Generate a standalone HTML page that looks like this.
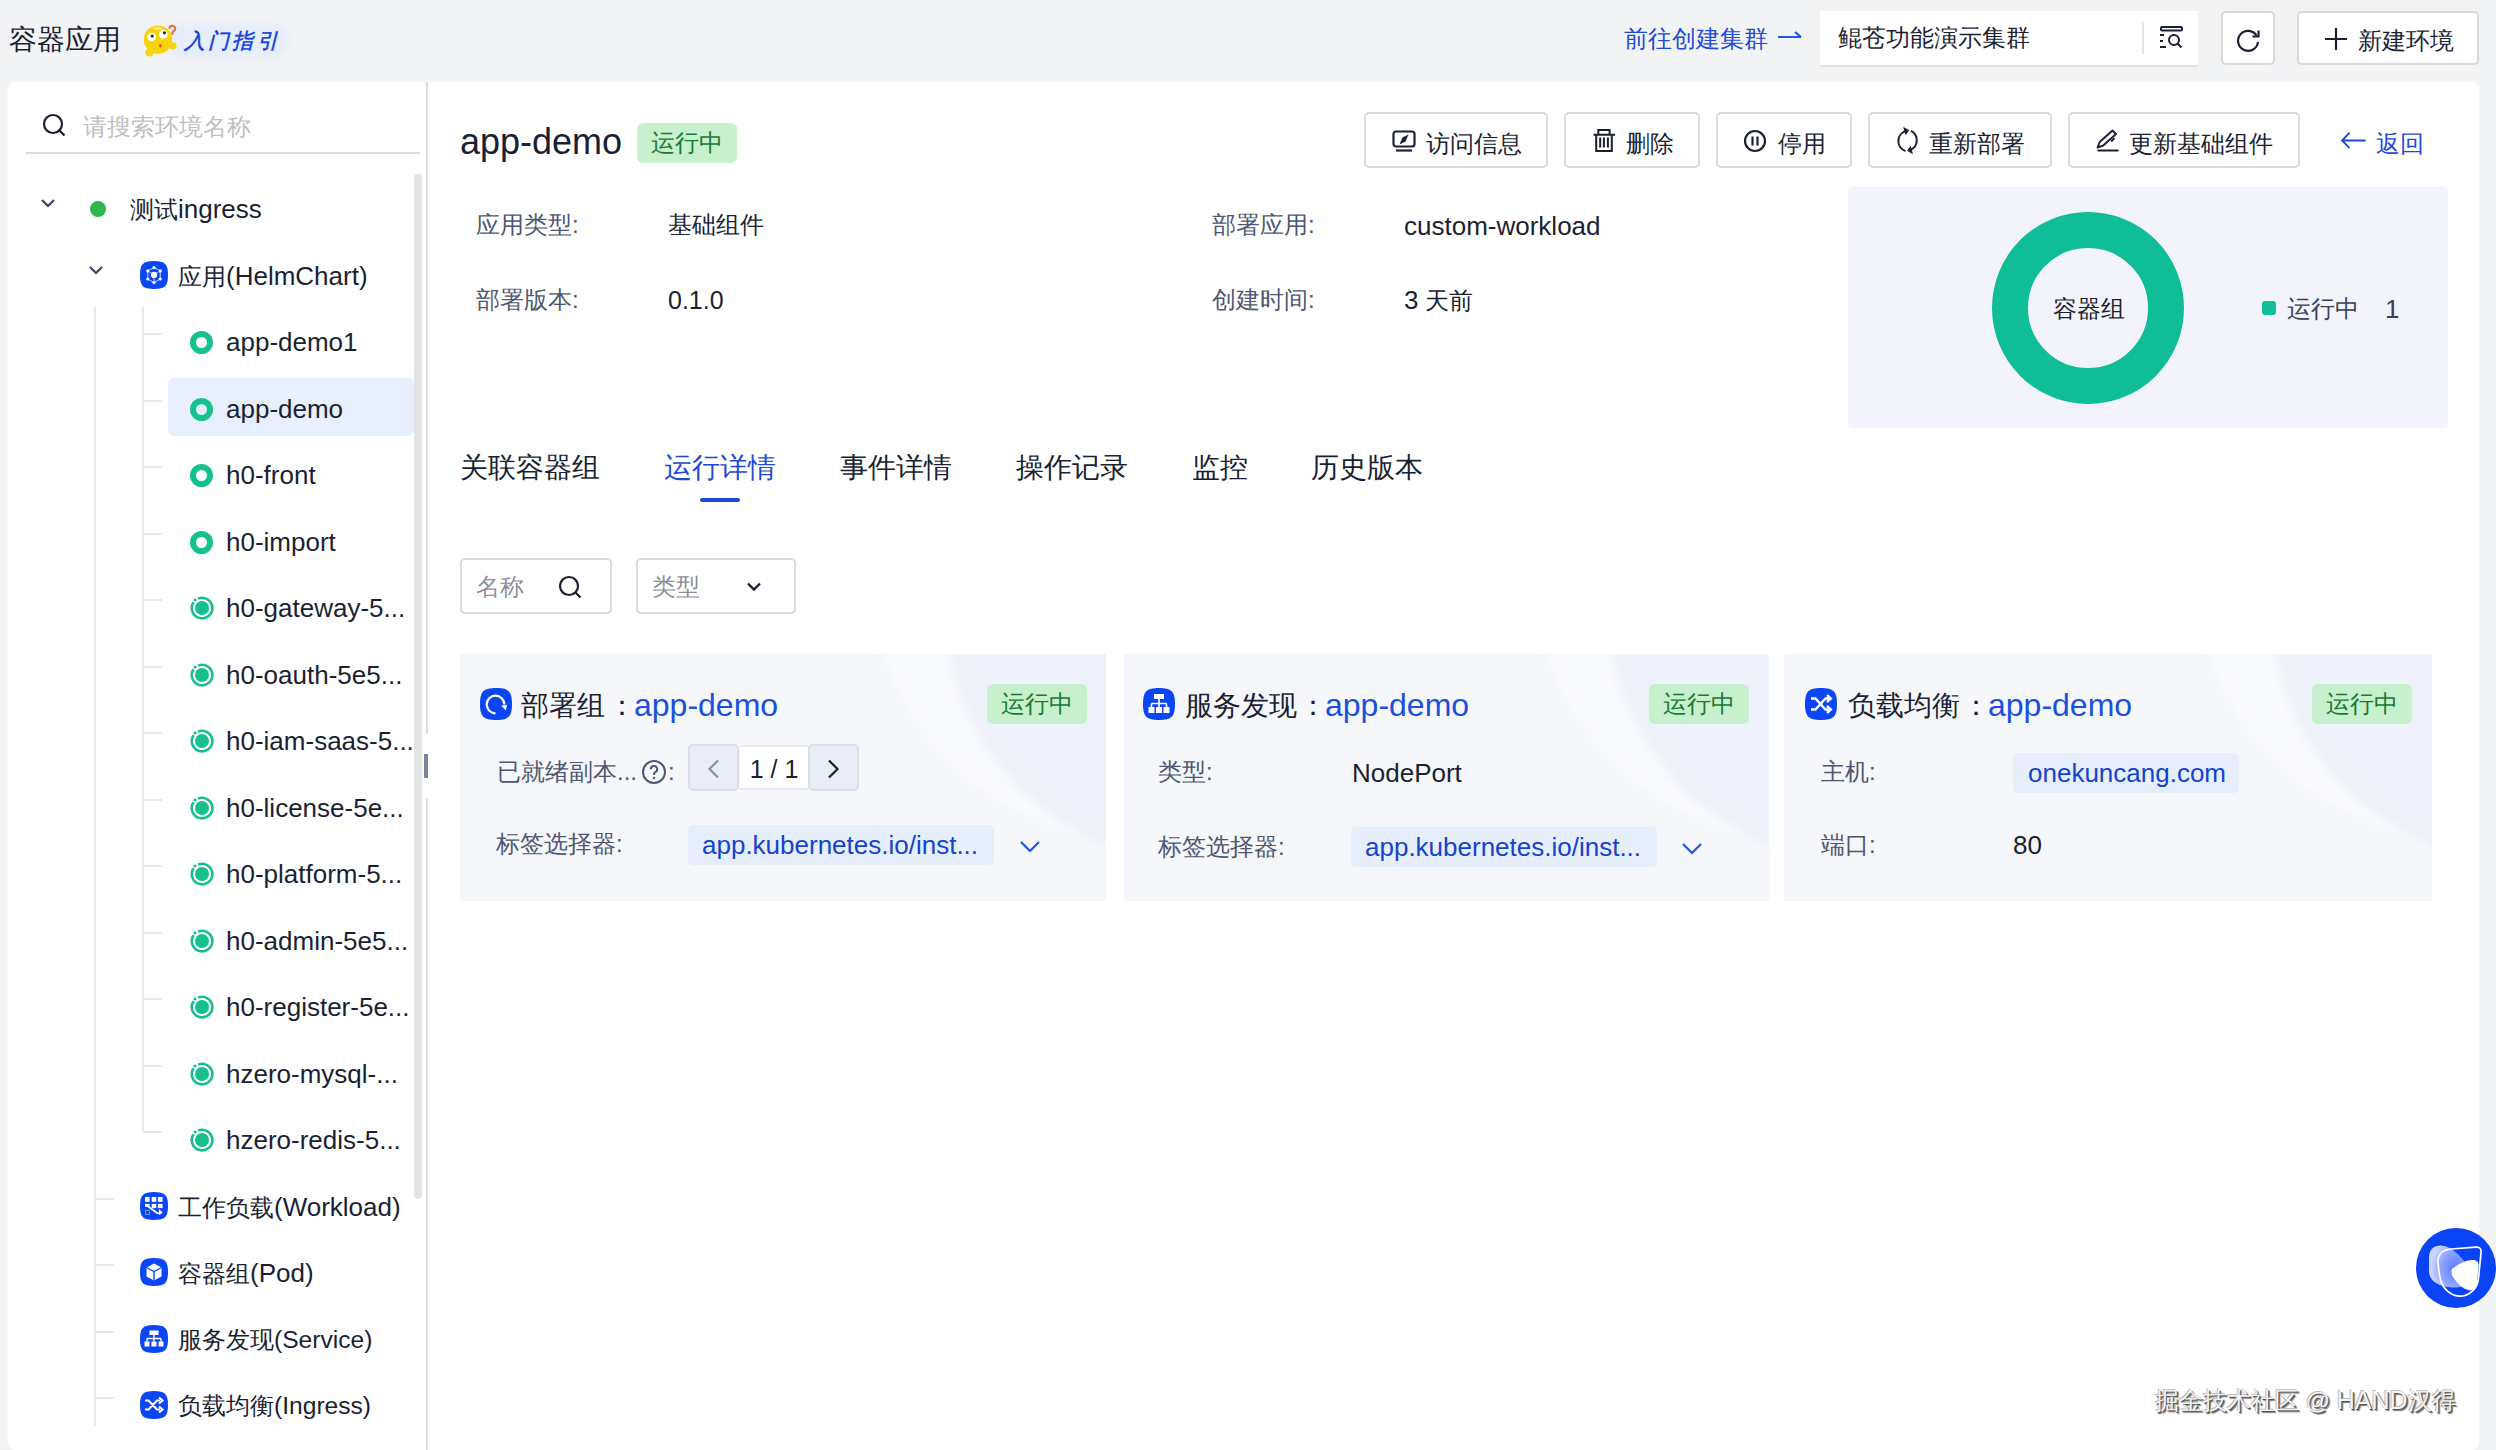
<!DOCTYPE html>
<html><head><meta charset="utf-8">
<style>
*{box-sizing:border-box;margin:0;padding:0}
html,body{width:2496px;height:1450px;overflow:hidden}
body{background:#f2f3f5;font-family:"Liberation Sans",sans-serif;color:#1b1f33;position:relative}
.t{position:absolute;white-space:nowrap;line-height:40px;height:40px;font-size:24px}
.f28{font-size:28px}
.L{font-size:26px}
.blue2{color:#1a50dc}
.blue3{color:#1443cc}
.deco1{position:absolute;width:530px;height:530px;border-radius:50%;background:#f9fafd;filter:blur(4px)}
.deco2{position:absolute;width:504px;height:504px;border-radius:50%;background:#edf0f9;filter:blur(5px);opacity:0.9}
.blue{color:#1d4ad9}
.lab{color:#4e5672}
.abs{position:absolute}
.btn{position:absolute;border:2px solid #d9d9d9;border-radius:5px;background:#fff}
.tag{position:absolute;background:#c7f0cd;color:#187a36;border-radius:6px;font-size:24px;line-height:40px;text-align:center}
.ico{position:absolute;width:28px;height:28px;border-radius:9px;background:#0a46f5}
.ring{position:absolute;width:23px;height:23px;border-radius:50%;border:6px solid #17c08f}
.tick{position:absolute;height:2px;width:19px;background:#e8e8e8}
.card{position:absolute;top:654px;height:247px;border-radius:3px;background:#f5f7fb;overflow:hidden;box-shadow:inset 0 0 0 1px #f3f4f8}
</style></head><body>

<!-- header -->
<div class="t f28" style="left:9px;top:20px">容器应用</div>
<div class="abs" style="left:166px;top:24px;width:122px;height:34px;border-radius:17px;background:#e6edfb;filter:blur(3px)"></div>
<svg class="abs" style="left:141px;top:22px" width="38" height="36" viewBox="0 0 38 36">
 <circle cx="17" cy="17.6" r="14.2" fill="#f7d20e"/>
 <circle cx="8.5" cy="30.5" r="4" fill="#f7d20e"/>
 <circle cx="32" cy="23.8" r="3.6" fill="#f7d20e"/>
 <ellipse cx="17" cy="6.5" rx="5" ry="1.6" fill="#fbe87a"/>
 <circle cx="10.8" cy="15" r="4.3" fill="#fff"/><circle cx="11.2" cy="14" r="1.6" fill="#3a2a10"/>
 <circle cx="22.3" cy="12.4" r="4.3" fill="#fff"/><circle cx="23.5" cy="10.8" r="1.6" fill="#3a2a10"/>
 <ellipse cx="19.4" cy="23.8" rx="1.3" ry="1.8" fill="#e0502a"/>
 <path d="M28.6 6.8a2.8 2.8 0 1 1 4 2.3c-.9.5-1.2 1.1-1.2 2v1.6" stroke="#e0683a" stroke-width="2" fill="none"/>
</svg>
<div class="t" style="left:184px;top:21px;font-size:21px;color:#1243dc;font-style:italic;letter-spacing:3.2px;-webkit-text-stroke:0.5px #1243dc">入门指引</div>

<div class="t blue" style="left:1624px;top:19px">前往创建集群</div>
<svg class="abs" style="left:1776px;top:28px" width="28" height="18" viewBox="0 0 28 18"><path d="M2 9H25M19 4l6 5" stroke="#1f57e6" stroke-width="2.2" fill="none"/></svg>

<div class="abs" style="left:1820px;top:11px;width:378px;height:54px;background:#fff;border-radius:1px;box-shadow:0 2px 1px rgba(0,0,0,0.07)"></div>
<div class="t" style="left:1838px;top:18px">鲲苍功能演示集群</div>
<div class="abs" style="left:2142px;top:22px;width:2px;height:32px;background:#e3e3e3"></div>
<svg class="abs" style="left:2158px;top:25px" width="26" height="26" viewBox="0 0 26 26">
 <rect x="3" y="2" width="21" height="3.5" rx="1" fill="none" stroke="#1b1f33" stroke-width="2"/>
 <path d="M2 10h4M2 16h3M2 22h6" stroke="#1b1f33" stroke-width="2"/>
 <circle cx="16" cy="15" r="5" fill="none" stroke="#1b1f33" stroke-width="2"/>
 <path d="M19.5 18.5l4 4" stroke="#1b1f33" stroke-width="2"/>
</svg>

<div class="btn" style="left:2221px;top:11px;width:54px;height:54px"></div>
<svg class="abs" style="left:2234px;top:26px" width="28" height="28" viewBox="0 0 28 28"><path d="M22.5 9.5A10 10 0 1 0 24 16" stroke="#1b1f33" stroke-width="2.2" fill="none"/><path d="M24.5 4.5v6h-6" stroke="#1b1f33" stroke-width="2.2" fill="none"/></svg>
<div class="btn" style="left:2297px;top:11px;width:182px;height:54px"></div>
<svg class="abs" style="left:2324px;top:27px" width="24" height="24" viewBox="0 0 24 24"><path d="M12 1v22M1 12h22" stroke="#1b1f33" stroke-width="2.2"/></svg>
<div class="t" style="left:2358px;top:21px">新建环境</div>

<!-- main panel -->
<div class="abs" style="left:8px;top:82px;width:2471px;height:1368px;background:#fff;border-radius:8px;box-shadow:0 0 3px rgba(255,255,255,0.9)"></div>

<!-- SIDEBAR -->
<!--SB-->
<svg class="abs" style="left:40px;top:112px" width="28" height="28" viewBox="0 0 28 28"><circle cx="13" cy="12" r="9" fill="none" stroke="#1b1f33" stroke-width="2.2"/><path d="M19.5 18.5l5 5" stroke="#1b1f33" stroke-width="2.2"/></svg>
<div class="t" style="left:83px;top:107px;color:#bfbfbf">请搜索环境名称</div>
<div class="abs" style="left:26px;top:152px;width:394px;height:2px;background:#dcdcdc"></div>
<div class="abs" style="left:426px;top:82px;width:2px;height:652px;background:#dedede"></div>
<div class="abs" style="left:426px;top:798px;width:2px;height:652px;background:#dedede"></div>
<div class="abs" style="left:424px;top:754px;width:4px;height:24px;background:#7b8599"></div>
<div class="abs" style="left:414px;top:174px;width:8px;height:1025px;background:#e3e3e3;border-radius:4px"></div>
<div class="abs" style="left:94px;top:307px;width:2px;height:1119px;background:#e8e8e8"></div>
<div class="abs" style="left:142px;top:307px;width:2px;height:825px;background:#e8e8e8"></div>
<div class="abs" style="left:168px;top:378px;width:246px;height:58px;background:#e7effd;border-radius:6px"></div>
<svg class="abs" style="left:40px;top:198.0px" width="16" height="10" viewBox="0 0 16 10"><path d="M2 2l6 6 6-6" stroke="#3d3f5e" stroke-width="2.2" fill="none"/></svg>
<div class="abs" style="left:90px;top:201.0px;width:16px;height:16px;border-radius:50%;background:#2db84f"></div>
<div class="t" style="left:130px;top:189.0px">测试<span class="L">ingress</span></div>
<svg class="abs" style="left:88px;top:264.5px" width="16" height="10" viewBox="0 0 16 10"><path d="M2 2l6 6 6-6" stroke="#3d3f5e" stroke-width="2.2" fill="none"/></svg>
<svg class="abs" style="left:140px;top:260.5px" width="28" height="28" viewBox="0 0 28 28"><path d="M14 0C25 0 28 3 28 14S25 28 14 28 0 25 0 14 3 0 14 0Z" fill="#0a46f5"/><path d="M14 6.4L20.2 9.9V18L14 21.6L7.8 18V9.9Z" fill="none" stroke="#fff" stroke-width="0.9" opacity="0.85"/><path d="M14 13.9L7.8 9.9M14 13.9L20.2 9.9M14 13.9V21.6" stroke="#fff" stroke-width="0.9" opacity="0.7"/><circle cx="14" cy="13.9" r="3.1" fill="#fff"/><circle cx="14" cy="6.6" r="1.6" fill="#fff"/><circle cx="20.2" cy="9.9" r="1.6" fill="#fff"/><circle cx="20.2" cy="18" r="1.6" fill="#fff"/><circle cx="14" cy="21.5" r="1.6" fill="#fff"/><circle cx="7.8" cy="18" r="1.6" fill="#fff"/><circle cx="7.8" cy="9.9" r="1.6" fill="#fff"/></svg>
<div class="t" style="left:178px;top:255.5px">应用<span class="L">(HelmChart)</span></div>
<div class="tick" style="left:143px;top:333.0px"></div>
<div class="ring" style="left:190px;top:331.0px"></div>
<div class="t" style="left:226px;top:322.0px"><span class="L">app-demo1</span></div>
<div class="tick" style="left:143px;top:399.5px"></div>
<div class="ring" style="left:190px;top:397.5px"></div>
<div class="t" style="left:226px;top:388.5px"><span class="L">app-demo</span></div>
<div class="tick" style="left:143px;top:466.0px"></div>
<div class="ring" style="left:190px;top:464.0px"></div>
<div class="t" style="left:226px;top:455.0px"><span class="L">h0-front</span></div>
<div class="tick" style="left:143px;top:532.5px"></div>
<div class="ring" style="left:190px;top:530.5px"></div>
<div class="t" style="left:226px;top:521.5px"><span class="L">h0-import</span></div>
<div class="tick" style="left:143px;top:599.0px"></div>
<svg class="abs" style="left:189px;top:595.0px" width="26" height="26" viewBox="0 0 26 26"><circle cx="13" cy="13" r="7" fill="#14c08e"/><path d="M9 3.6A10.3 10.3 0 1 1 4.6 7.2" stroke="#14c08e" stroke-width="2.6" fill="none"/><circle cx="6" cy="5" r="1.6" fill="#14c08e"/></svg>
<div class="t" style="left:226px;top:588.0px"><span class="L">h0-gateway-5...</span></div>
<div class="tick" style="left:143px;top:665.5px"></div>
<svg class="abs" style="left:189px;top:661.5px" width="26" height="26" viewBox="0 0 26 26"><circle cx="13" cy="13" r="7" fill="#14c08e"/><path d="M9 3.6A10.3 10.3 0 1 1 4.6 7.2" stroke="#14c08e" stroke-width="2.6" fill="none"/><circle cx="6" cy="5" r="1.6" fill="#14c08e"/></svg>
<div class="t" style="left:226px;top:654.5px"><span class="L">h0-oauth-5e5...</span></div>
<div class="tick" style="left:143px;top:732.0px"></div>
<svg class="abs" style="left:189px;top:728.0px" width="26" height="26" viewBox="0 0 26 26"><circle cx="13" cy="13" r="7" fill="#14c08e"/><path d="M9 3.6A10.3 10.3 0 1 1 4.6 7.2" stroke="#14c08e" stroke-width="2.6" fill="none"/><circle cx="6" cy="5" r="1.6" fill="#14c08e"/></svg>
<div class="t" style="left:226px;top:721.0px"><span class="L">h0-iam-saas-5...</span></div>
<div class="tick" style="left:143px;top:798.5px"></div>
<svg class="abs" style="left:189px;top:794.5px" width="26" height="26" viewBox="0 0 26 26"><circle cx="13" cy="13" r="7" fill="#14c08e"/><path d="M9 3.6A10.3 10.3 0 1 1 4.6 7.2" stroke="#14c08e" stroke-width="2.6" fill="none"/><circle cx="6" cy="5" r="1.6" fill="#14c08e"/></svg>
<div class="t" style="left:226px;top:787.5px"><span class="L">h0-license-5e...</span></div>
<div class="tick" style="left:143px;top:865.0px"></div>
<svg class="abs" style="left:189px;top:861.0px" width="26" height="26" viewBox="0 0 26 26"><circle cx="13" cy="13" r="7" fill="#14c08e"/><path d="M9 3.6A10.3 10.3 0 1 1 4.6 7.2" stroke="#14c08e" stroke-width="2.6" fill="none"/><circle cx="6" cy="5" r="1.6" fill="#14c08e"/></svg>
<div class="t" style="left:226px;top:854.0px"><span class="L">h0-platform-5...</span></div>
<div class="tick" style="left:143px;top:931.5px"></div>
<svg class="abs" style="left:189px;top:927.5px" width="26" height="26" viewBox="0 0 26 26"><circle cx="13" cy="13" r="7" fill="#14c08e"/><path d="M9 3.6A10.3 10.3 0 1 1 4.6 7.2" stroke="#14c08e" stroke-width="2.6" fill="none"/><circle cx="6" cy="5" r="1.6" fill="#14c08e"/></svg>
<div class="t" style="left:226px;top:920.5px"><span class="L">h0-admin-5e5...</span></div>
<div class="tick" style="left:143px;top:998.0px"></div>
<svg class="abs" style="left:189px;top:994.0px" width="26" height="26" viewBox="0 0 26 26"><circle cx="13" cy="13" r="7" fill="#14c08e"/><path d="M9 3.6A10.3 10.3 0 1 1 4.6 7.2" stroke="#14c08e" stroke-width="2.6" fill="none"/><circle cx="6" cy="5" r="1.6" fill="#14c08e"/></svg>
<div class="t" style="left:226px;top:987.0px"><span class="L">h0-register-5e...</span></div>
<div class="tick" style="left:143px;top:1064.5px"></div>
<svg class="abs" style="left:189px;top:1060.5px" width="26" height="26" viewBox="0 0 26 26"><circle cx="13" cy="13" r="7" fill="#14c08e"/><path d="M9 3.6A10.3 10.3 0 1 1 4.6 7.2" stroke="#14c08e" stroke-width="2.6" fill="none"/><circle cx="6" cy="5" r="1.6" fill="#14c08e"/></svg>
<div class="t" style="left:226px;top:1053.5px"><span class="L">hzero-mysql-...</span></div>
<div class="tick" style="left:143px;top:1131.0px"></div>
<svg class="abs" style="left:189px;top:1127.0px" width="26" height="26" viewBox="0 0 26 26"><circle cx="13" cy="13" r="7" fill="#14c08e"/><path d="M9 3.6A10.3 10.3 0 1 1 4.6 7.2" stroke="#14c08e" stroke-width="2.6" fill="none"/><circle cx="6" cy="5" r="1.6" fill="#14c08e"/></svg>
<div class="t" style="left:226px;top:1120.0px"><span class="L">hzero-redis-5...</span></div>
<div class="tick" style="left:95px;top:1197.5px"></div>
<svg class="abs" style="left:140px;top:1191.5px" width="28" height="28" viewBox="0 0 28 28"><path d="M14 0C25 0 28 3 28 14S25 28 14 28 0 25 0 14 3 0 14 0Z" fill="#0a46f5"/><rect x="5" y="5" width="4.6" height="4.8" fill="#fff"/><rect x="11.7" y="5" width="4.6" height="4.8" fill="#fff"/><rect x="17.9" y="5" width="4.7" height="4.8" fill="#fff"/><rect x="11.7" y="11.9" width="4.6" height="4.2" fill="#fff"/><rect x="17.9" y="11.9" width="4.7" height="4.2" fill="#fff"/><rect x="5" y="11.9" width="4.6" height="2" fill="#fff"/><rect x="5.4" y="18.4" width="4" height="4" fill="none" stroke="#fff" stroke-width="0.7" opacity="0.6"/><path d="M5 14.9h2.6l9 7h2" stroke="#0a46f5" stroke-width="3.2" fill="none"/><path d="M5 13.9h2.6l9.5 7.2h2" stroke="#fff" stroke-width="1.9" fill="none"/><path d="M18.9 17.1l3.8 3.3-3.6 2.9z" fill="#fff"/></svg>
<div class="t" style="left:178px;top:1186.5px">工作负载<span class="L">(Workload)</span></div>
<div class="tick" style="left:95px;top:1264.0px"></div>
<svg class="abs" style="left:140px;top:1258.0px" width="28" height="28" viewBox="0 0 28 28"><path d="M14 0C25 0 28 3 28 14S25 28 14 28 0 25 0 14 3 0 14 0Z" fill="#0a46f5"/><path d="M14 5.5l7.5 4v9l-7.5 4-7.5-4v-9z" fill="#fff"/><path d="M6.5 9.5l7.5 4 7.5-4M14 13.5v9" stroke="#0a46f5" stroke-width="1.4" fill="none"/></svg>
<div class="t" style="left:178px;top:1253.0px">容器组<span class="L">(Pod)</span></div>
<div class="tick" style="left:95px;top:1330.5px"></div>
<svg class="abs" style="left:140px;top:1324.5px" width="28" height="28" viewBox="0 0 28 28"><path d="M14 0C25 0 28 3 28 14S25 28 14 28 0 25 0 14 3 0 14 0Z" fill="#0a46f5"/><rect x="9.5" y="5.5" width="9" height="4.5" fill="#fff"/><path d="M14 10v3.5M7 13.5h14M7 13.5v3M14 13.5v3M21 13.5v3" stroke="#fff" stroke-width="1.4" fill="none"/><rect x="4.5" y="16.5" width="5" height="5" fill="#fff"/><rect x="11.5" y="16.5" width="5" height="5" fill="#fff"/><rect x="18.5" y="16.5" width="5" height="5" fill="#fff"/></svg>
<div class="t" style="left:178px;top:1319.5px">服务发现<span class="L" style="font-size:24.6px">(Service)</span></div>
<div class="tick" style="left:95px;top:1397.0px"></div>
<svg class="abs" style="left:140px;top:1391.0px" width="28" height="28" viewBox="0 0 28 28"><path d="M14 0C25 0 28 3 28 14S25 28 14 28 0 25 0 14 3 0 14 0Z" fill="#0a46f5"/><path d="M5 9.5h3.5l8.5 9h3M5 18.5h3.5l8.5-9h3" stroke="#fff" stroke-width="2.2" fill="none"/><path d="M19 6.5l3.5 3-3.5 3M19 15.5l3.5 3-3.5 3" stroke="#fff" stroke-width="2.2" fill="none" stroke-linejoin="miter"/></svg>
<div class="t" style="left:178px;top:1386.0px">负载均衡<span class="L" style="font-size:24.6px">(Ingress)</span></div>
<!--/SB-->

<!-- MAIN -->
<!--MAIN-->
<!-- title -->
<div class="t" style="left:460px;top:122px;font-size:36px;height:40px;line-height:40px">app-demo</div>
<div class="tag" style="left:637px;top:123px;width:100px;height:40px">运行中</div>

<!-- info -->
<div class="t lab" style="left:476px;top:205px">应用类型:</div>
<div class="t" style="left:668px;top:205px">基础组件</div>
<div class="t lab" style="left:476px;top:280px">部署版本:</div>
<div class="t" style="left:668px;top:280px;font-size:25px">0.1.0</div>
<div class="t lab" style="left:1212px;top:205px">部署应用:</div>
<div class="t L" style="left:1404px;top:206px">custom-workload</div>
<div class="t lab" style="left:1212px;top:280px">创建时间:</div>
<div class="t" style="left:1404px;top:280px"><span class="L">3</span> 天前</div>

<!-- action buttons -->
<div class="btn" style="left:1364px;top:112px;width:184px;height:56px"></div>
<svg class="abs" style="left:1392px;top:130px" width="24" height="22" viewBox="0 0 24 22"><rect x="1.5" y="1.5" width="21" height="15" rx="2.5" fill="none" stroke="#1b1f33" stroke-width="2.2"/><path d="M4 20.5h16" stroke="#1b1f33" stroke-width="2.2"/><path d="M16.5 4.5l-3 7-6 3 3-7z" fill="#1b1f33"/></svg>
<div class="t" style="left:1426px;top:123.5px">访问信息</div>

<div class="btn" style="left:1564px;top:112px;width:136px;height:56px"></div>
<svg class="abs" style="left:1588px;top:124px" width="32" height="36" viewBox="0 0 32 36"><path d="M5.5 10.7h21.5M10.3 10.7V6h11.3v4.7M8.2 10.7V27h15.6V10.7M12.2 13.4v10M15.9 13.4v10M19.9 13.4v10" stroke="#1b1f33" stroke-width="2" fill="none"/></svg>
<div class="t" style="left:1626px;top:123.5px">删除</div>

<div class="btn" style="left:1716px;top:112px;width:136px;height:56px"></div>
<svg class="abs" style="left:1743px;top:129px" width="24" height="24" viewBox="0 0 24 24"><circle cx="12" cy="12" r="10" fill="none" stroke="#1b1f33" stroke-width="2.2"/><path d="M9.5 7.5v9M14.5 7.5v9" stroke="#1b1f33" stroke-width="2.2"/></svg>
<div class="t" style="left:1778px;top:123.5px">停用</div>

<div class="btn" style="left:1868px;top:112px;width:184px;height:56px"></div>
<svg class="abs" style="left:1890px;top:124px" width="36" height="36" viewBox="0 0 36 36"><path d="M15.5 27A10.5 10.5 0 0 1 16.5 6.8" stroke="#1b1f33" stroke-width="2" fill="none"/><path d="M21 6.8A10.5 10.5 0 0 1 20 26" stroke="#1b1f33" stroke-width="2" fill="none"/><path d="M14.2 4l4.1 2.4-2.5 3.5z" fill="#1b1f33" stroke="#1b1f33" stroke-width="1.2"/><path d="M22 29l-4.1-2.4 2.5-3.5z" fill="#1b1f33" stroke="#1b1f33" stroke-width="1.2"/></svg>
<div class="t" style="left:1929px;top:123.5px">重新部署</div>

<div class="btn" style="left:2068px;top:112px;width:232px;height:56px"></div>
<svg class="abs" style="left:2090px;top:124px" width="36" height="36" viewBox="0 0 36 36"><path d="M7.5 23.5l2.2-5.5L22.5 6.5l3.5 3.5L13.2 21.5z" stroke="#1b1f33" stroke-width="1.9" fill="none" stroke-linejoin="round"/><path d="M21.2 17.5l3.3-3.3" stroke="#1b1f33" stroke-width="1.9"/><path d="M7.5 26.5h21" stroke="#1b1f33" stroke-width="2"/></svg>
<div class="t" style="left:2129px;top:123.5px">更新基础组件</div>

<svg class="abs" style="left:2336px;top:128px" width="36" height="26" viewBox="0 0 36 26"><path d="M6 12.5h23.7M13.6 4.6L6 12.5l7.6 7.7" stroke="#1d4ad9" stroke-width="1.9" fill="none"/></svg>
<div class="t blue" style="left:2376px;top:123.5px">返回</div>

<!-- chart -->
<div class="abs" style="left:1848px;top:187px;width:600px;height:241px;background:#f3f4fb;border-radius:4px"></div>
<div class="abs" style="left:1992px;top:212px;width:192px;height:192px;border-radius:50%;border:36px solid #0fbe96;background:#f3f4fb"></div>
<div class="t" style="left:2053px;top:289px">容器组</div>
<div class="abs" style="left:2262px;top:301px;width:14px;height:14px;border-radius:3px;background:#0fbf97"></div>
<div class="t" style="left:2287px;top:289px;color:#3a3f55">运行中</div>
<div class="t L" style="left:2385px;top:289px;color:#3a3f55">1</div>

<!-- tabs -->
<div class="t f28" style="left:460px;top:448px">关联容器组</div>
<div class="t f28 blue" style="left:664px;top:448px">运行详情</div>
<div class="abs" style="left:700px;top:498px;width:40px;height:4px;background:#1d4ad9;border-radius:2px"></div>
<div class="t f28" style="left:840px;top:448px">事件详情</div>
<div class="t f28" style="left:1016px;top:448px">操作记录</div>
<div class="t f28" style="left:1192px;top:448px">监控</div>
<div class="t f28" style="left:1311px;top:448px">历史版本</div>

<!-- filters -->
<div class="btn" style="left:460px;top:558px;width:152px;height:56px"></div>
<div class="t" style="left:476px;top:567px;color:#8e8e99">名称</div>
<svg class="abs" style="left:557px;top:574px" width="26" height="26" viewBox="0 0 26 26"><circle cx="12" cy="12" r="9" fill="none" stroke="#1b1f33" stroke-width="2.2"/><path d="M18.5 18.5l5 5" stroke="#1b1f33" stroke-width="2.2"/></svg>
<div class="btn" style="left:636px;top:558px;width:160px;height:56px"></div>
<div class="t" style="left:652px;top:567px;color:#8e8e99">类型</div>
<svg class="abs" style="left:745px;top:580px" width="18" height="14" viewBox="0 0 18 14"><path d="M3 3.5l6 6 6-6" stroke="#1b1f33" stroke-width="2.4" fill="none"/></svg>

<!-- cards -->
<div class="card" style="left:460px;width:646px"><div class="deco1" style="left:411px;top:-345px"></div><div class="deco2" style="left:486px;top:-296px"></div></div>
<div class="card" style="left:1124px;width:645px"><div class="deco1" style="left:410px;top:-345px"></div><div class="deco2" style="left:485px;top:-296px"></div></div>
<div class="card" style="left:1784px;width:648px"><div class="deco1" style="left:413px;top:-345px"></div><div class="deco2" style="left:488px;top:-296px"></div></div>

<!-- card 1 -->
<svg class="abs" style="left:480px;top:688px" width="32" height="32" viewBox="0 0 32 32"><path d="M16 0C28.5 0 32 3.5 32 16S28.5 32 16 32 0 28.5 0 16 3.5 0 16 0Z" fill="#0a46f5"/><path d="M15.5 25.3A8.8 8.8 0 1 1 24.3 16.5" stroke="#fff" stroke-width="2.2" fill="none"/><path d="M21.2 17.6l5.8-0.6-1.2 5.6z" fill="#fff"/></svg>
<div class="t f28" style="left:521px;top:686px">部署组</div>
<div class="t f28" style="left:608px;top:686px">：</div>
<div class="t blue2" style="left:634px;top:685px;font-size:32px">app-demo</div>
<div class="tag" style="left:987px;top:684px;width:100px;height:40px">运行中</div>

<div class="t lab" style="left:497px;top:752px">已就绪副本...</div>
<svg class="abs" style="left:641px;top:759px" width="26" height="26" viewBox="0 0 26 26"><circle cx="13" cy="13" r="11" fill="none" stroke="#4e5672" stroke-width="2"/><path d="M9.8 10.2a3.2 3.2 0 1 1 4.6 2.9c-1 .5-1.4 1.1-1.4 2.2v.8" stroke="#4e5672" stroke-width="2" fill="none"/><circle cx="13" cy="19" r="1.2" fill="#4e5672"/></svg>
<div class="t lab" style="left:668px;top:752px">:</div>
<div class="abs" style="left:688px;top:744px;width:51px;height:47px;background:#e9edf7;border:2px solid #dcdfe8;border-radius:5px"></div>
<svg class="abs" style="left:704px;top:757px" width="20" height="24" viewBox="0 0 20 24"><path d="M14 3.5l-8.5 8.5 8.5 8.5" stroke="#8a90a3" stroke-width="2.2" fill="none"/></svg>
<div class="abs" style="left:740px;top:745px;width:68px;height:45px;background:#fff;border-top:2px solid #e6e8ee;border-bottom:2px solid #e6e8ee"></div>
<div class="t" style="left:740px;top:749px;width:68px;text-align:center;font-size:25px;color:#1b1f33">1 / 1</div>
<div class="abs" style="left:808px;top:744px;width:51px;height:47px;background:#e9edf7;border:2px solid #dcdfe8;border-radius:5px"></div>
<svg class="abs" style="left:823px;top:757px" width="20" height="24" viewBox="0 0 20 24"><path d="M6 3.5l8.5 8.5-8.5 8.5" stroke="#1b1f33" stroke-width="2.2" fill="none"/></svg>

<div class="t lab" style="left:496px;top:824px">标签选择器:</div>
<div class="abs" style="left:688px;top:825px;width:306px;height:40px;background:#e6eefc;border-radius:5px"></div>
<div class="t blue3 L" style="left:702px;top:825px">app.kubernetes.io/inst...</div>
<svg class="abs" style="left:1018px;top:838px" width="24" height="18" viewBox="0 0 24 18"><path d="M3 4l9 9 9-9" stroke="#1f57e6" stroke-width="2.2" fill="none"/></svg>

<!-- card 2 -->
<svg class="abs" style="left:1143px;top:688px" width="32" height="32" viewBox="0 0 32 32"><path d="M16 0C28.5 0 32 3.5 32 16S28.5 32 16 32 0 28.5 0 16 3.5 0 16 0Z" fill="#0a46f5"/><rect x="11" y="6" width="10" height="5" fill="#fff"/><path d="M16 11v4.5M8.5 15.5h15M8.5 15.5v3.5M16 15.5v3.5M23.5 15.5v3.5" stroke="#fff" stroke-width="1.6" fill="none"/><rect x="5.5" y="19" width="6" height="6" fill="#fff"/><rect x="13" y="19" width="6" height="6" fill="#fff"/><rect x="20.5" y="19" width="6" height="6" fill="#fff"/></svg>
<div class="t f28" style="left:1185px;top:686px">服务发现</div>
<div class="t f28" style="left:1299px;top:686px">：</div>
<div class="t blue2" style="left:1325px;top:685px;font-size:32px">app-demo</div>
<div class="tag" style="left:1649px;top:684px;width:100px;height:40px">运行中</div>
<div class="t lab" style="left:1158px;top:752px">类型:</div>
<div class="t L" style="left:1352px;top:753px">NodePort</div>
<div class="t lab" style="left:1158px;top:827px">标签选择器:</div>
<div class="abs" style="left:1351px;top:827px;width:306px;height:40px;background:#e6eefc;border-radius:5px"></div>
<div class="t blue3 L" style="left:1365px;top:827px">app.kubernetes.io/inst...</div>
<svg class="abs" style="left:1680px;top:840px" width="24" height="18" viewBox="0 0 24 18"><path d="M3 4l9 9 9-9" stroke="#1f57e6" stroke-width="2.2" fill="none"/></svg>

<!-- card 3 -->
<svg class="abs" style="left:1805px;top:688px" width="32" height="32" viewBox="0 0 32 32"><path d="M16 0C28.5 0 32 3.5 32 16S28.5 32 16 32 0 28.5 0 16 3.5 0 16 0Z" fill="#0a46f5"/><path d="M6 10.5h4.5l10 11h4.5M6 21.5h4.5l10-11h4.5" stroke="#fff" stroke-width="2.4" fill="none"/><path d="M22 7l3.8 3.5L22 14M22 18l3.8 3.5L22 25" stroke="#fff" stroke-width="2.4" fill="none"/></svg>
<div class="t f28" style="left:1848px;top:686px">负载均衡</div>
<div class="t f28" style="left:1962px;top:686px">：</div>
<div class="t blue2" style="left:1988px;top:685px;font-size:32px">app-demo</div>
<div class="tag" style="left:2312px;top:684px;width:100px;height:40px">运行中</div>
<div class="t lab" style="left:1821px;top:752px">主机:</div>
<div class="abs" style="left:2013px;top:753px;width:226px;height:40px;background:#e6eefc;border-radius:5px"></div>
<div class="t blue3 L" style="left:2028px;top:753px">onekuncang.com</div>
<div class="t lab" style="left:1821px;top:825px">端口:</div>
<div class="t L" style="left:2013px;top:825px">80</div>

<!-- float btn -->
<svg class="abs" style="left:2416px;top:1228px" width="80" height="80" viewBox="0 0 80 80">
 <defs><radialGradient id="fg" cx="0.75" cy="0.55" r="0.7"><stop offset="0" stop-color="#5a78ff"/><stop offset="0.6" stop-color="#8fa4ff"/><stop offset="1" stop-color="#cbd5ff"/></radialGradient></defs>
 <circle cx="40" cy="40" r="40" fill="#0b44f7"/>
 <path d="M13 30C13 21 18 17.5 25 17.5C33 18 41 24 48 33L49 37C42 40 36 42 36.5 46C38 52 42 56 48 58.5L40 59.5C29 60 14 56 13 44Z" fill="url(#fg)"/>
 <path d="M22 34C21.5 26 26 22 35 21L60 19.2C64 19 65.5 21 65 25L62.3 52C60.5 62 52 68.2 44 68.2C35 68 27 61 24.6 52C23 45 22.3 39 22 34Z" stroke="#fff" stroke-width="1.7" fill="none"/>
 <path d="M36 41C42 36 50 32 56.5 32C61 32 63 34.5 62.5 38L61 55C60.5 59 57.5 62 53.6 62.4C46 61 39.5 54 36.2 47.5C35.3 45 35.2 43 36 41Z" fill="#fff"/>
</svg>
<!-- watermark -->
<div class="t" style="left:2155px;top:1380px;font-size:24px;color:#f4f4f4;text-shadow:1px 1px 0 #555,-1px -1px 0 #bbb,2px 2px 1px #777">掘金技术社区 @ <span class="L" style="font-size:25px">HAND</span>汉得</div>

<!--/MAIN-->

</body></html>
